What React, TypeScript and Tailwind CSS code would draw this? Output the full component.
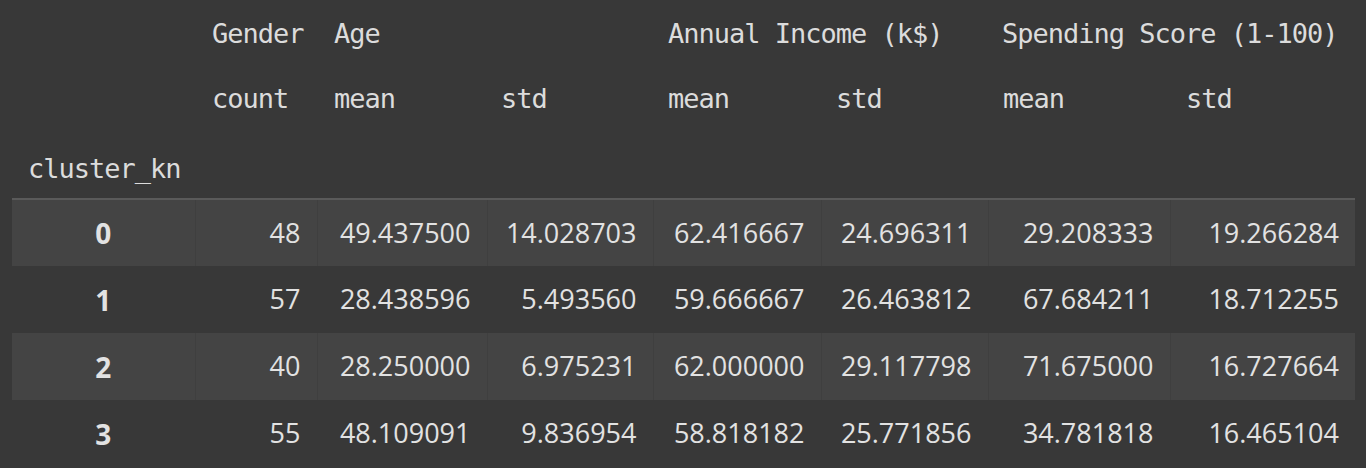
const colWidths = [183, 122, 170, 166, 168, 167, 182, 185];

const subHeads = ["count", "mean", "std", "mean", "std", "mean", "std"];

const rows = [
    { idx: "0", vals: ["48", "49.437500", "14.028703", "62.416667", "24.696311", "29.208333", "19.266284"] },
    { idx: "1", vals: ["57", "28.438596", "5.493560", "59.666667", "26.463812", "67.684211", "18.712255"] },
    { idx: "2", vals: ["40", "28.250000", "6.975231", "62.000000", "29.117798", "71.675000", "16.727664"] },
    { idx: "3", vals: ["55", "48.109091", "9.836954", "58.818182", "25.771856", "34.781818", "16.465104"] },
];

const mono = "font-['DejaVu_Sans_Mono',monospace] text-[27px] tracking-[-1px] font-normal text-[#dcdcdc]";

const App = () => {
    return (
        <div className="min-h-screen w-full bg-[#383838] pl-3 pr-[11px]">
            <table className="table-fixed border-collapse">
                <colgroup>
                    {colWidths.map((w, i) => (
                        <col key={i} style={{ width: w }} />
                    ))}
                </colgroup>
                <thead>
                    {/* top level column names */}
                    <tr className="h-[68px]">
                        <th />
                        <th className={`${mono} text-left pl-[17px]`}>Gender</th>
                        <th colSpan={2} className={`${mono} text-left pl-[17px]`}>Age</th>
                        <th colSpan={2} className={`${mono} text-left pl-[15px]`}>Annual Income (k$)</th>
                        <th colSpan={2} className={`${mono} text-left pl-[14px]`}>Spending Score (1-100)</th>
                    </tr>
                    {/* aggregate names */}
                    <tr className="h-[63px]">
                        <th />
                        {subHeads.map((h, i) => (
                            <th key={i} className={`${mono} text-left ${i < 2 ? "pl-[17px]" : i === 2 ? "pl-[14px]" : i === 6 ? "pl-[16px]" : "pl-[15px]"}`}>
                                {h}
                            </th>
                        ))}
                    </tr>
                    {/* index name */}
                    <tr className="h-[68px]">
                        <th className={`${mono} text-left pl-4 pt-[9px]`}>cluster_kn</th>
                        {subHeads.map((_, i) => (
                            <th key={i} />
                        ))}
                    </tr>
                </thead>
                <tbody className="border-t-2 border-[#5a5a5a]">
                    {rows.map((r, ri) => {
                        const striped = ri % 2 === 0;
                        const line = striped ? "border-[#3f3f3f]" : "border-[#383838]";
                        return (
                            <tr key={r.idx} className={`h-[67px] ${striped ? "bg-[#444444]" : "bg-[#383838]"}`}>
                                <th className={`border-r ${line} text-center font-['Open_Sans',sans-serif] text-[28px] font-bold text-[#e2e2e2]`}>
                                    {r.idx}
                                </th>
                                {r.vals.map((v, i) => (
                                    <td
                                        key={i}
                                        className={`border-r ${line} last:border-r-0 pr-[16px] text-right font-['Open_Sans',sans-serif] text-[27px] text-[#e2e2e2]`}
                                    >
                                        {v}
                                    </td>
                                ))}
                            </tr>
                        );
                    })}
                </tbody>
            </table>
        </div>
    );
};

export default App;
